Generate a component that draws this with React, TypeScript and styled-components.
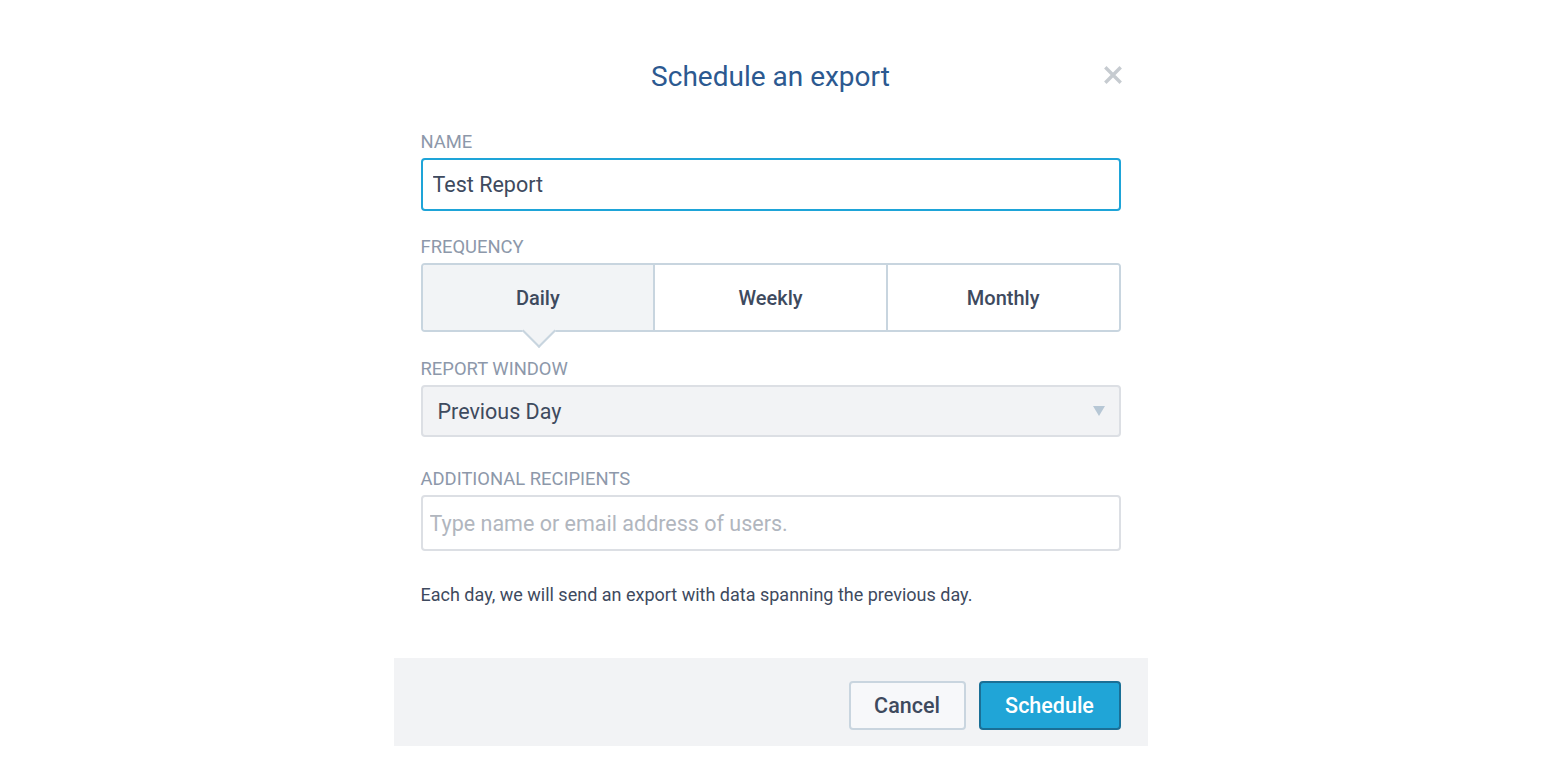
import React from 'react';
import styled, { createGlobalStyle } from 'styled-components';

const GlobalStyle = createGlobalStyle`
    html, body {
        margin: 0;
        padding: 0;
        background: #ffffff;
    }
    body {
        font-family: Roboto, 'Liberation Sans', Arial, sans-serif;
        color: #3e4a5e;
    }
    * {
        box-sizing: border-box;
    }
`;

const frequencies = ['Daily', 'Weekly', 'Monthly'];

function App() {
    const active = 'Daily';

    return (
        <>
            <GlobalStyle />
            <StModal>
                <StHeader>
                    <StTitle>Schedule an export</StTitle>
                    <StClose aria-label="Close">
                        <svg width="18" height="18" viewBox="0 0 18 18">
                            <path d="M2.5 2.5 L15.5 15.5 M15.5 2.5 L2.5 15.5" stroke="#c6cbd0" strokeWidth="3.4" strokeLinecap="square" />
                        </svg>
                    </StClose>
                </StHeader>

                <StBody>
                    <StField>
                        <StLabel>Name</StLabel>
                        <StTextInput $focused defaultValue="Test Report" />
                    </StField>

                    <StField $gap={26}>
                        <StLabel>Frequency</StLabel>
                        <StSegments>
                            {frequencies.map((f) => (
                                <StSegment key={f} $active={f === active}>
                                    {f}
                                </StSegment>
                            ))}
                        </StSegments>
                    </StField>

                    <StField $gap={27}>
                        <StLabel>Report window</StLabel>
                        <StSelect>
                            <span>Previous Day</span>
                            <StCaret />
                        </StSelect>
                    </StField>

                    <StField $gap={32}>
                        <StLabel>Additional recipients</StLabel>
                        <StRecipients placeholder="Type name or email address of users." />
                    </StField>

                    <StHelp>Each day, we will send an export with data spanning the previous day.</StHelp>
                </StBody>

                <StFooter>
                    <StButton $width={117}>Cancel</StButton>
                    <StButton $width={142} $primary>
                        Schedule
                    </StButton>
                </StFooter>
            </StModal>
        </>
    );
}

const StModal = styled.div`
    width: 754px;
    margin: 40px auto 0;
    background: #ffffff;
`;

const StHeader = styled.div`
    position: relative;
    padding-top: 22px;
    display: flex;
    justify-content: center;
`;

const StTitle = styled.h2`
    margin: 0;
    font-size: 28px;
    line-height: 30px;
    font-weight: 400;
    color: #2c5990;
`;

const StClose = styled.button`
    position: absolute;
    right: 26px;
    top: 26px;
    width: 18px;
    height: 18px;
    padding: 0;
    border: none;
    background: none;
    display: flex;
    cursor: pointer;
`;

const StBody = styled.div`
    padding: 40px 27px 52px;
    display: flex;
    flex-direction: column;
`;

const StField = styled.div<{ $gap?: number }>`
    display: flex;
    flex-direction: column;
    gap: 6px;
    margin-top: ${(p) => p.$gap ?? 0}px;
`;

const StLabel = styled.label`
    font-size: 18.4px;
    line-height: 20px;
    text-transform: uppercase;
    color: #8d98aa;
`;

const StTextInput = styled.input<{ $focused?: boolean }>`
    height: 53px;
    width: 100%;
    padding: 0 10px;
    border: 2px solid ${(p) => (p.$focused ? '#1ea4d8' : '#dcdfe4')};
    border-radius: 4px;
    font-family: Roboto, 'Liberation Sans', Arial, sans-serif;
    font-size: 21.5px;
    color: #3e4a5e;
    outline: none;
    background: #ffffff;
`;

const StRecipients = styled(StTextInput)`
    height: 56px;
    padding: 0 7px;
    &::placeholder {
        color: #b1b6be;
    }
`;

const StSegments = styled.div`
    display: flex;
    height: 69px;
    border: 2px solid #c8d5df;
    border-radius: 4px;
`;

const StSegment = styled.button<{ $active?: boolean }>`
    position: relative;
    flex: 1;
    padding: 0;
    border: none;
    border-left: 2px solid #c8d5df;
    background: ${(p) => (p.$active ? '#f2f4f6' : '#ffffff')};
    font-family: Roboto, 'Liberation Sans', Arial, sans-serif;
    font-size: 20px;
    font-weight: 500;
    color: #3e4a5e;
    cursor: pointer;

    &:first-child {
        border-left: none;
        border-radius: 2px 0 0 2px;
    }
    &:last-child {
        border-radius: 0 2px 2px 0;
    }

    ${(p) =>
        p.$active &&
        `
        &::after {
            content: '';
            position: absolute;
            left: 50%;
            bottom: -13px;
            width: 22px;
            height: 22px;
            margin-left: -11px;
            background: #f2f4f6;
            border-right: 2px solid #c8d5df;
            border-bottom: 2px solid #c8d5df;
            transform: rotate(45deg);
        }
    `}
`;

const StSelect = styled.div`
    height: 52px;
    padding: 0 14px 0 15px;
    display: flex;
    align-items: center;
    justify-content: space-between;
    background: #f2f3f5;
    border: 2px solid #dcdfe4;
    border-radius: 4px;
    font-size: 21.5px;
    color: #3e4a5e;
`;

const StCaret = styled.span`
    width: 0;
    height: 0;
    border-left: 6px solid transparent;
    border-right: 6px solid transparent;
    border-top: 10px solid #b7c7d5;
`;

const StHelp = styled.p`
    margin: 33px 0 0;
    font-size: 18px;
    line-height: 22px;
    color: #3e4a5e;
`;

const StFooter = styled.div`
    height: 88px;
    padding: 23px 27px 0;
    display: flex;
    justify-content: flex-end;
    align-items: flex-start;
    gap: 13px;
    background: #f2f3f5;
`;

const StButton = styled.button<{ $primary?: boolean; $width: number }>`
    width: ${(p) => p.$width}px;
    height: 49px;
    padding: 0;
    border-radius: 4px;
    border: 2px solid ${(p) => (p.$primary ? '#1a6f96' : '#c9d5df')};
    background: ${(p) => (p.$primary ? '#20a5d7' : '#f7f8fa')};
    color: ${(p) => (p.$primary ? '#ffffff' : '#3e4a5e')};
    font-family: Roboto, 'Liberation Sans', Arial, sans-serif;
    font-size: 21.5px;
    font-weight: 500;
    cursor: pointer;
`;

export default App;
